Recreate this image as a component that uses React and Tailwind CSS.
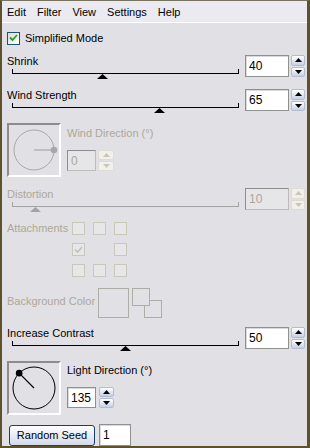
import React from 'react';

const DIS = 'text-[#aca899]';

function Spin({ disabled, className }) {
  const btn = disabled
    ? 'border-[#dedcd3] bg-[#f1f0eb]'
    : 'border-[#b4bdd0] bg-linear-to-b from-white to-[#c6d0e6]';
  const fill = disabled ? '#c9c7bc' : '#000';
  return (
    <div className={`flex flex-col gap-px ${className}`}>
      <div className={`flex flex-1 items-center justify-center rounded-[2px] border ${btn}`}>
        <svg width="7" height="4">
          <polygon points="0,4 3.5,0 7,4" fill={fill} />
        </svg>
      </div>
      <div className={`flex flex-1 items-center justify-center rounded-[2px] border ${btn}`}>
        <svg width="7" height="4">
          <polygon points="0,0 3.5,4 7,0" fill={fill} />
        </svg>
      </div>
    </div>
  );
}

function NumBox({ value, disabled, className }) {
  return (
    <div
      className={`flex items-center border pl-[3px] text-[12px] ${
        disabled
          ? 'border-[#bdbcb6] border-t-[#8d8d8d] border-l-[#8d8d8d] bg-[#e6e5e8] text-[#aca899]'
          : 'border-[#8f9090] bg-white shadow-[inset_1px_1px_0_#d9d9d9]'
      } ${className}`}
    >
      {value}
    </div>
  );
}

function SliderRow({ label, value, disabled, className }) {
  const line = disabled ? 'border-[#a3a3a3]' : 'border-black';
  return (
    <div className={`flex ${className}`}>
      <div className="flex-1">
        <div className={`h-[13px] leading-[13px] ${disabled ? DIS : ''}`}>{label}</div>
        <div className={`relative ml-[5px] mt-px h-[5px] w-[227px] border-x border-b ${line}`}>
          <svg
            className="absolute top-[5px]"
            style={{ left: Math.round((value / 100) * 226) - 6 }}
            width="11"
            height="5"
          >
            <polygon points="0,5 5.5,0 11,5" fill={disabled ? '#a3a3a3' : '#000'} />
          </svg>
        </div>
      </div>
      <NumBox value={value} disabled={disabled} className="h-[22px] w-[44px]" />
      <Spin disabled={disabled} className="ml-[2px] h-[22px] w-[14px]" />
    </div>
  );
}

function Dial({ angle, disabled }) {
  const c = disabled ? '#a8a8a8' : '#000';
  const r = disabled ? 20 : 21;
  const a = (angle * Math.PI) / 180;
  const x = 25 + Math.cos(a) * r;
  const y = 25 - Math.sin(a) * r;
  return (
    <div className="h-[54px] w-[54px] border-2 border-b-white border-l-[#8c8c8c] border-r-white border-t-[#8c8c8c]">
      <svg width="50" height="50">
        <circle cx="25" cy="25" r={r} fill="none" stroke={c} strokeWidth="1" />
        <line x1="25" y1="25" x2={x} y2={y} stroke={c} strokeWidth="1.2" />
        <circle cx={x} cy={y} r="3.3" fill={c} />
      </svg>
    </div>
  );
}

function DisabledBox({ checked }) {
  return (
    <div className="flex h-[13px] w-[13px] items-center justify-center border border-[#cac8bb] bg-[#e7e6e9]">
      {checked && (
        <svg width="9" height="8">
          <polyline points="1,3.5 3.5,6 8,1" fill="none" stroke="#c2c0b3" strokeWidth="1.6" />
        </svg>
      )}
    </div>
  );
}

export default function App() {
  const grid = [
    [false, false, false],
    [true, null, false],
    [false, false, false],
  ];

  return (
    <div className="h-[448px] w-[310px] overflow-hidden border-b-2 border-l-2 border-r-[3px] border-t border-[#5e522e] border-t-[#77735f] bg-[#e1e0e5] font-['Liberation_Sans',Arial,sans-serif] text-[11px] text-black">
      {/* Menu */}
      <div className="flex h-[22px] items-center gap-[11px] border-b border-white bg-[#ebeaf0] pl-[5px] pt-[2px]">
        <span>Edit</span>
        <span>Filter</span>
        <span>View</span>
        <span>Settings</span>
        <span>Help</span>
      </div>

      <div className="flex flex-col pl-[5px] pr-[2px]">
        {/* Simplified mode */}
        <div className="mt-[8px] flex h-[14px] items-center gap-[5px]">
          <div className="flex h-[13px] w-[13px] items-center justify-center border border-[#1c5180] bg-linear-to-br from-[#dcdcd7] to-white">
            <svg width="9" height="8">
              <polyline points="1,3.5 3.5,6 8,1" fill="none" stroke="#21a121" strokeWidth="1.8" />
            </svg>
          </div>
          <span>Simplified Mode</span>
        </div>

        <SliderRow label="Shrink" value={40} className="mt-[10px]" />
        <SliderRow label="Wind Strength" value={65} className="mt-[12px]" />

        {/* Wind direction */}
        <div className="mt-[12px] flex">
          <Dial angle={0} disabled />
          <div className="ml-[6px] flex flex-col">
            <div className={`mt-[4px] h-[13px] leading-[13px] ${DIS}`}>Wind Direction (°)</div>
            <div className="mt-[10px] flex">
              <NumBox value={0} disabled className="h-[21px] w-[29px]" />
              <Spin disabled className="ml-[2px] h-[21px] w-[16px]" />
            </div>
          </div>
        </div>

        <SliderRow label="Distortion" value={10} disabled className="mt-[11px]" />

        {/* Attachments */}
        <div className="mt-[12px] flex">
          <div className={`w-[65px] leading-[13px] ${DIS}`}>Attachments</div>
          <div className="grid grid-cols-[13px_13px_13px] gap-x-[8px] gap-y-[8px]">
            {grid.flat().map((v, i) =>
              v === null ? <div key={i} /> : <DisabledBox key={i} checked={v} />
            )}
          </div>
        </div>

        {/* Background color */}
        <div className="mt-[11px] flex h-[30px]">
          <div className={`mt-[7px] w-[91px] leading-[13px] ${DIS}`}>Background Color</div>
          <div className="h-[30px] w-[31px] border border-[#aeada7]" />
          <svg className="ml-[3px]" width="31" height="31">
            <rect x="12.5" y="12.5" width="17" height="17" fill="none" stroke="#aeada7" />
            <rect x="0.5" y="0.5" width="17" height="17" fill="#e1e0e5" stroke="#aeada7" />
          </svg>
        </div>

        <SliderRow label="Increase Contrast" value={50} className="mt-[9px]" />

        {/* Light direction */}
        <div className="mt-[12px] flex">
          <Dial angle={135} />
          <div className="ml-[6px] flex flex-col">
            <div className="mt-[3px] h-[13px] leading-[13px]">Light Direction (°)</div>
            <div className="mt-[10px] flex">
              <NumBox value={135} className="h-[21px] w-[29px]" />
              <Spin className="ml-[3px] h-[21px] w-[15px]" />
            </div>
          </div>
        </div>

        {/* Random seed */}
        <div className="mt-[9px] flex items-start">
          <button className="ml-[2px] mt-px flex h-[21px] w-[86px] items-center justify-center rounded-[3px] border border-[#1f3c6e] bg-linear-to-b from-white to-[#d3d9ea] text-[11px]">
            Random Seed
          </button>
          <NumBox value={1} className="ml-[4px] h-[22px] w-[32px]" />
        </div>
      </div>
    </div>
  );
}
